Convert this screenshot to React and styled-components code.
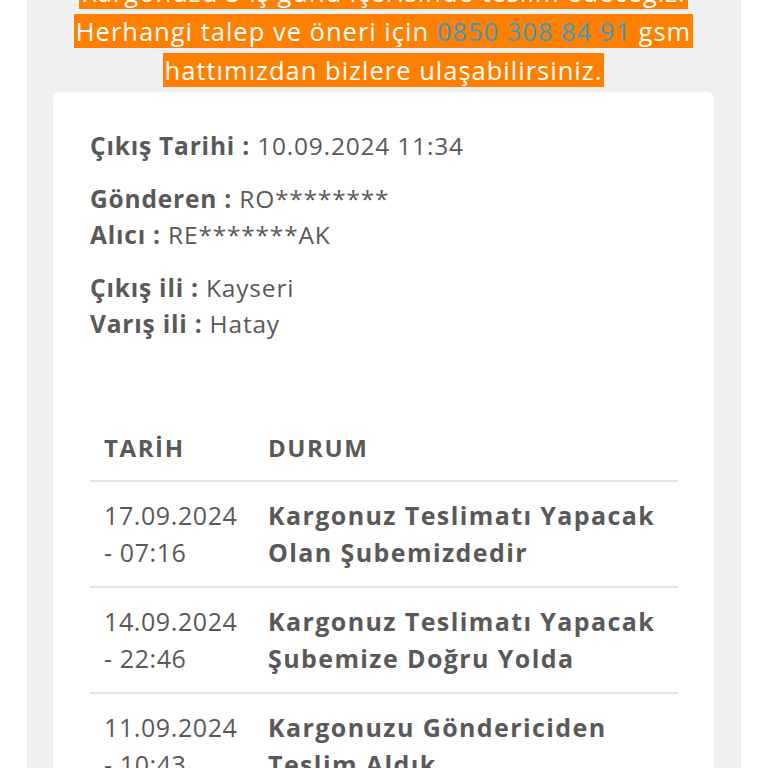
import React from "react";
import styled, { createGlobalStyle } from "styled-components";

const GlobalStyle = createGlobalStyle`
  html, body { margin: 0; padding: 0; background: #ffffff; }
  body { font-family: "Open Sans", "Noto Sans", sans-serif; color: #595959; overflow: hidden; }
`;

const Page = styled.div`
  margin: 0 27px;
  min-height: 768px;
  background: #f0f0f0;
  padding: 0 27px 40px 26px;
  box-sizing: border-box;
`;

const Banner = styled.p`
  margin: -27px 0 0;
  text-align: center;
  font-size: 25.5px;
  letter-spacing: 1px;
  line-height: 39px;
  color: #ffffff;
`;

const Mark = styled.span`
  background: #ff8000;
  padding: 0 2px;
  box-decoration-break: clone;
  -webkit-box-decoration-break: clone;
`;

const Phone = styled.span`
  color: #3c9cc2;
`;

const Card = styled.div`
  margin-top: 2px;
  background: #ffffff;
  border-radius: 7px;
  padding: 36px 36px 40px 37px;
`;

const InfoGroup = styled.p`
  margin: 0 0 17px;
  font-size: 24.5px;
  letter-spacing: 0.8px;
  line-height: 36px;
  color: #595959;
`;

const Label = styled.b`
  font-weight: 700;
`;

const Table = styled.table`
  margin-top: 71px;
  width: 100%;
  border-collapse: collapse;
  table-layout: fixed;
`;

const Th = styled.th`
  text-align: left;
  font-size: 24px;
  font-weight: 700;
  letter-spacing: 1.6px;
  line-height: 37px;
  padding: 16px 14px 14px;
  border-bottom: 2px solid #e2e2e2;
  width: ${(p) => p.$w || "auto"};
  color: #595959;
`;

const Td = styled.td`
  vertical-align: top;
  font-size: 25px;
  letter-spacing: ${(p) => (p.$bold ? "1.4px" : "0.6px")};
  line-height: 37px;
  padding: 15px 14px;
  border-bottom: 2px solid #e2e2e2;
  font-weight: ${(p) => (p.$bold ? 700 : 400)};
  color: #595959;
  white-space: nowrap;
`;

const rows = [
  { date: "17.09.2024", time: "07:16", status: ["Kargonuz Teslimatı Yapacak", "Olan Şubemizdedir"] },
  { date: "14.09.2024", time: "22:46", status: ["Kargonuz Teslimatı Yapacak", "Şubemize Doğru Yolda"] },
  { date: "11.09.2024", time: "10:43", status: ["Kargonuzu Göndericiden", "Teslim Aldık"] },
];

export default function App() {
  return (
    <>
      <GlobalStyle />
      <Page>
        <Banner>
          <Mark>Kargonuzu 3 iş günü içerisinde teslim edeceğiz.</Mark>
          <br />
          <Mark>
            Herhangi talep ve öneri için <Phone>0850 308 84 91</Phone> gsm
          </Mark>
          <br />
          <Mark>hattımızdan bizlere ulaşabilirsiniz.</Mark>
        </Banner>
        <Card>
          <InfoGroup>
            <Label>Çıkış Tarihi :</Label> 10.09.2024 11:34
          </InfoGroup>
          <InfoGroup>
            <Label>Gönderen :</Label> RO********
            <br />
            <Label>Alıcı :</Label> RE*******AK
          </InfoGroup>
          <InfoGroup>
            <Label>Çıkış ili :</Label> Kayseri
            <br />
            <Label>Varış ili :</Label> Hatay
          </InfoGroup>
          <Table>
            <thead>
              <tr>
                <Th $w="136px">TARİH</Th>
                <Th>DURUM</Th>
              </tr>
            </thead>
            <tbody>
              {rows.map((r) => (
                <tr key={r.date + r.time}>
                  <Td>
                    {r.date}
                    <br />- {r.time}
                  </Td>
                  <Td $bold>
                    {r.status[0]}
                    <br />
                    {r.status[1]}
                  </Td>
                </tr>
              ))}
            </tbody>
          </Table>
        </Card>
      </Page>
    </>
  );
}
